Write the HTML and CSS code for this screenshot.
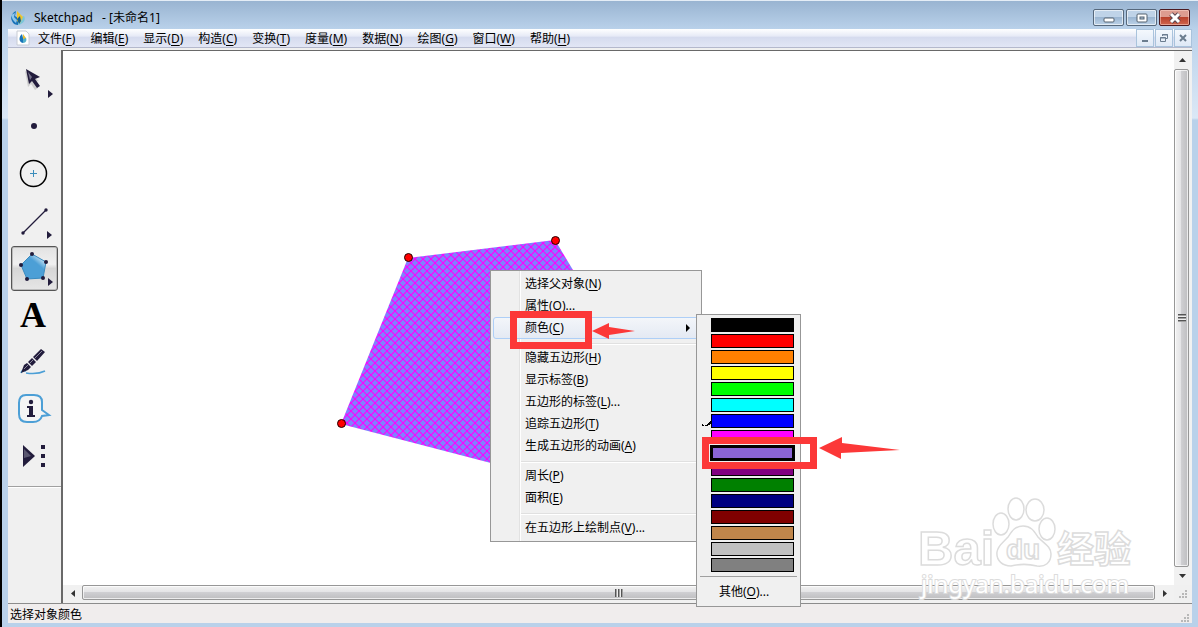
FILE: index.html
```html
<!DOCTYPE html>
<html lang="zh-CN">
<head>
    <meta charset="UTF-8">
    <meta name="viewport" content="width=device-width, initial-scale=1.0">
    <title>Sketchpad - [未命名1]</title>
    <link rel="stylesheet" href="styles.css">
</head>
<body>
    <div class="window">
        <!-- 标题栏 -->
        <header class="title-bar">
            <svg class="app-icon" width="16" height="16" viewBox="0 0 16 16">
                <path d="M6 1C2 3 0 7 2 11c1 3 4 4 6 4V8L5 6z" fill="#1873b8"/>
                <path d="M8 8l6-2c2 3 0 8-6 9z" fill="#7cc6d8"/>
                <path d="M7 1l6 6-3 6-3-2z" fill="#f0c52c"/>
                <path d="M1 5l4-2-1 4 3 3-1 3C3 11 2 8 1 5z" fill="#8fc6ea"/>
                <path d="M7 9l3-3 1 5-2 3z" fill="#14618d"/>
            </svg>
            <span class="title">Sketchpad&nbsp;&nbsp; - [未命名1]</span>
            <div class="window-buttons">
                <button class="win-btn" aria-label="最小化">
                    <svg width="12" height="12" viewBox="0 0 12 12"><rect x="1" y="6" width="10" height="4" rx="1" fill="#fff" stroke="#52606e"/></svg>
                </button>
                <button class="win-btn" aria-label="最大化">
                    <svg width="12" height="12" viewBox="0 0 12 12"><rect x="1" y="2" width="10" height="8" rx="1" fill="#fff" stroke="#52606e"/><rect x="4" y="5" width="4" height="2" fill="#b4c8dc" stroke="#52606e"/></svg>
                </button>
                <button class="win-btn close" aria-label="关闭">
                    <svg width="14" height="12" viewBox="0 0 14 12"><path d="M3 2l8 8M11 2l-8 8" stroke="#5a4650" stroke-width="5"/><path d="M3 2l8 8M11 2l-8 8" stroke="#fff" stroke-width="3"/></svg>
                </button>
            </div>
        </header>

        <!-- 菜单栏 -->
        <nav class="menu-bar">
            <svg class="doc-icon" width="14" height="16" viewBox="0 0 14 16">
                <path d="M1 1h9l3 3v11H1z" fill="#fff" stroke="#c8ccd4"/>
                <path d="M6 4c-3 2-4 8 1 9V8z" fill="#1873b8"/>
                <path d="M7 4l3 4-1 3-2-1z" fill="#e8bd30"/>
                <path d="M7 9l3-1c1 2 0 5-3 5z" fill="#52b0ca"/>
            </svg>
            <button>文件(<u>F</u>)</button>
            <button>编辑(<u>E</u>)</button>
            <button>显示(<u>D</u>)</button>
            <button>构造(<u>C</u>)</button>
            <button>变换(<u>T</u>)</button>
            <button>度量(<u>M</u>)</button>
            <button>数据(<u>N</u>)</button>
            <button>绘图(<u>G</u>)</button>
            <button>窗口(<u>W</u>)</button>
            <button>帮助(<u>H</u>)</button>
            <div class="doc-buttons">
                <button class="doc-btn" aria-label="最小化文档"><svg width="10" height="10" viewBox="0 0 10 10"><path d="M2 8h6" stroke="#6b7d8f" stroke-width="2"/></svg></button>
                <button class="doc-btn" aria-label="还原文档"><svg width="10" height="10" viewBox="0 0 10 10" fill="none" stroke="#6b7d8f"><path d="M3.500 3V1.500h5v4H7M3 2h6"/><path d="M1.500 4.500h5v4h-5zM1 5h6"/></svg></button>
                <button class="doc-btn" aria-label="关闭文档"><svg width="10" height="10" viewBox="0 0 10 10"><path d="M2 2l6 6M8 2L2 8" stroke="#6b7d8f" stroke-width="2"/></svg></button>
            </div>
        </nav>

        <main class="workspace">
            <!-- 工具箱 -->
            <aside class="toolbox">
                <button class="tool" aria-label="移动箭头工具">
                    <svg width="45" height="43" viewBox="0 0 45 43">
                        <path d="M13 12l3 16 3-3 4 6 3-2-4-6 5-1z" fill="#999" opacity=".4"/>
                        <path d="M14 10l3 15 3-3 5 7 3-2-5-7 5-2z" fill="#221c3c"/>
                        <path d="M16 13l2 8 2-3z" fill="#77748c"/>
                        <path d="M36 31l5 4-5 4z" fill="#221c3c"/>
                    </svg>
                </button>
                <button class="tool" aria-label="点工具">
                    <svg width="45" height="43" viewBox="0 0 45 43"><circle cx="22" cy="20" r="3" fill="#221c3c"/></svg>
                </button>
                <button class="tool" aria-label="圆工具">
                    <svg width="45" height="43" viewBox="0 0 45 43"><circle cx="21.500" cy="20.500" r="13" fill="none" stroke="#000" stroke-width="1.500"/><path d="M18 20.500h7M21.500 17v7" stroke="#3b8dbb"/></svg>
                </button>
                <button class="tool" aria-label="线段直尺工具">
                    <svg width="45" height="43" viewBox="0 0 45 43"><path d="M11 33L34 10" stroke="#221c3c" stroke-width="1.300"/><circle cx="11" cy="33" r="1.700" fill="#221c3c"/><circle cx="34" cy="10" r="1.700" fill="#221c3c"/><path d="M35 31l5 4-5 4z" fill="#221c3c"/></svg>
                </button>
                <button class="tool active" aria-label="多边形工具">
                    <svg width="45" height="43" viewBox="0 0 45 43">
                        <defs><linearGradient id="blue" x1="0.900" y1="0" x2="0.400" y2="0.600"><stop offset="0.200" stop-color="#c9e5f5"/><stop offset="0.600" stop-color="#4c9fd6"/></linearGradient></defs>
                        <path d="M20 7l14 8-3 16-16 1L9 18z" fill="url(#blue)" stroke="#398abf"/>
                        <g fill="#221c3c"><circle cx="20" cy="7" r="2"/><circle cx="34" cy="15" r="2"/><circle cx="31" cy="31" r="2"/><circle cx="15" cy="32" r="2"/><circle cx="9" cy="18" r="2"/><path d="M36 31l5 4-5 4z"/></g>
                    </svg>
                </button>
                <button class="tool letter" aria-label="文本工具">A</button>
                <button class="tool" aria-label="标记工具">
                    <svg width="45" height="43" viewBox="0 0 45 43"><path d="M9 32c1-3 2-3 5-2M14 32c7 1 13 1 19-2" fill="none" stroke="#4c9fd6" stroke-width="1.600"/><path d="M9 32l3-8 3-2 4 4-3 3zM16 21l4-4 4 4-4 4zM21 16l8-8 4 3-8 9z" fill="#221c3c"/><path d="M12 28l18-18" stroke="#8b889c"/></svg>
                </button>
                <button class="tool" aria-label="信息工具">
                    <svg width="45" height="43" viewBox="0 0 45 43"><path d="M14 7h8q8 0 8 7v8l7 5-7 1q-2 6-9 6h-6q-8 0-8-8V15q0-8 7-8z" fill="#fff" fill-opacity=".3" stroke="#4c9fd6" stroke-width="2"/><circle cx="19" cy="14" r="2.200" fill="#221c3c"/><path d="M15 18h6v9h2v2h-8v-2h2v-7h-2z" fill="#221c3c"/></svg>
                </button>
                <button class="tool" aria-label="自定义工具">
                    <svg width="45" height="43" viewBox="0 0 45 43"><path d="M11 10l12 11-12 11z" fill="#221c3c"/><path d="M12 14l7 7-7 2z" fill="#5a5770"/><path d="M29 10h4v4h-4zM29 19h4v4h-4zM29 28h4v4h-4z" fill="#221c3c"/></svg>
                </button>
            </aside>

            <section class="document">
                <div class="canvas">
                    <svg class="drawing">
                        <defs>
                            <pattern id="hatch" width="8" height="8" patternUnits="userSpaceOnUse">
                                <rect width="8" height="8" fill="#8080ff"/>
                                <path d="M-1 -1L9 9M9 -1L-1 9" stroke="#ff00ff" stroke-width="1.100"/>
                            </pattern>
                        </defs>
                        <path d="M345 207L492 189L577 331L493 429L278 373z" fill="url(#hatch)"/>
                        <g fill="#f00" stroke="#200">
                            <circle cx="345.500" cy="206.500" r="4"/>
                            <circle cx="492.500" cy="189.500" r="4"/>
                            <circle cx="278.500" cy="372.500" r="4"/>
                        </g>
                    </svg>

                    <!-- 右键菜单 -->
                    <ul class="context-menu">
                        <li><button>选择父对象(<u>N</u>)</button></li>
                        <li><button>属性(<u>O</u>)...</button></li>
                        <li class="open">
                            <button>颜色(<u>C</u>)</button>
                            <div class="color-menu">
                                <div class="swatches">
                                    <button class="swatch black" aria-label="黑色"></button>
                                    <button class="swatch red" aria-label="红色"></button>
                                    <button class="swatch orange" aria-label="橙色"></button>
                                    <button class="swatch yellow" aria-label="黄色"></button>
                                    <button class="swatch lime" aria-label="绿色"></button>
                                    <button class="swatch cyan" aria-label="青色"></button>
                                    <button class="swatch blue" aria-label="蓝色"></button>
                                    <button class="swatch magenta" aria-label="洋红"></button>
                                    <button class="swatch violet selected" aria-label="紫罗兰"></button>
                                    <button class="swatch purple" aria-label="紫色"></button>
                                    <button class="swatch green" aria-label="深绿"></button>
                                    <button class="swatch navy" aria-label="深蓝"></button>
                                    <button class="swatch maroon" aria-label="深红"></button>
                                    <button class="swatch tan" aria-label="棕色"></button>
                                    <button class="swatch silver" aria-label="浅灰"></button>
                                    <button class="swatch gray" aria-label="灰色"></button>
                                </div>
                                <button class="other">其他(<u>O</u>)...</button>
                            </div>
                        </li>
                        <li class="separator"></li>
                        <li><button>隐藏五边形(<u>H</u>)</button></li>
                        <li><button>显示标签(<u>B</u>)</button></li>
                        <li><button>五边形的标签(<u>L</u>)...</button></li>
                        <li><button>追踪五边形(<u>T</u>)</button></li>
                        <li><button>生成五边形的动画(<u>A</u>)</button></li>
                        <li class="separator"></li>
                        <li><button>周长(<u>P</u>)</button></li>
                        <li><button>面积(<u>E</u>)</button></li>
                        <li class="separator"></li>
                        <li><button>在五边形上绘制点(<u>V</u>)...</button></li>
                    </ul>

                    <!-- 红色标注 -->
                    <svg class="marks" width="840" height="430">
                        <path d="M639 373h1v1h1v1h-2zM642 374h2v-1h1v-1h1v-1h1v-1h1v3h-1v1h-2v1h-3z" fill="#000"/>
                        <g fill="none" stroke="#fc3838" stroke-width="7">
                            <rect x="450.500" y="263.500" width="75" height="31"/>
                            <rect x="642.500" y="389.500" width="108" height="25"/>
                        </g>
                        <path d="M529 280l17-8v4l26 4-26 4v4zM756 397l23-11v6l58 7-59 3v6z" fill="#fc3838"/>
                    </svg>

                    <!-- 水印 -->
                    <svg class="watermark" width="225" height="110" viewBox="0 0 225 110">
                        <g fill="#fff" stroke="#dcdcdc" stroke-width="1.500">
                            <text class="wm-bai" x="3" y="71">Bai</text>
                            <ellipse cx="86" cy="30" rx="8" ry="11"/>
                            <ellipse cx="101" cy="15" rx="8" ry="11"/>
                            <ellipse cx="120" cy="16" rx="9" ry="11"/>
                            <ellipse cx="132" cy="35" rx="8" ry="11"/>
                            <path d="M108 32c8 0 11 5 15 11 5 6 13 9 13 17 0 9-6 13-14 12-8-2-18-2-26 0-8 0-15-5-14-14 1-7 7-10 11-15 4-6 7-11 15-11z"/>
                            <text class="wm-du" x="91" y="65">du</text>
                            <text class="wm-cn" x="142" y="69">经验</text>
                        </g>
                        <text class="wm-url" x="6" y="99">jingyan.baidu.com</text>
                    </svg>
                </div>

                <div class="scrollbar vertical">
                    <button class="arrow" aria-label="向上滚动"><svg width="7" height="4"><path d="M0 4l3.500-4L7 4z"/></svg></button>
                    <div class="thumb"><span class="grip"></span></div>
                    <button class="arrow" aria-label="向下滚动"><svg width="7" height="4"><path d="M0 0h7L3.500 4z"/></svg></button>
                </div>
                <div class="scrollbar horizontal">
                    <button class="arrow" aria-label="向左滚动"><svg width="4" height="7"><path d="M4 0v7L0 3.500z"/></svg></button>
                    <div class="thumb"><span class="grip"></span></div>
                    <button class="arrow" aria-label="向右滚动"><svg width="4" height="7"><path d="M0 0l4 3.500L0 7z"/></svg></button>
                </div>
                <div class="corner"><svg class="size-grip" width="9" height="9" viewBox="0 0 9 9"><path d="M6 0h2v2H6zM3 3h2v2H3zM6 3h2v2H6zM0 6h2v2H0zM3 6h2v2H3zM6 6h2v2H6z"/></svg></div>
            </section>
        </main>

        <footer class="status-bar">
            <span>选择对象颜色</span>
            <svg class="size-grip" width="9" height="9" viewBox="0 0 9 9"><path d="M6 0h2v2H6zM3 3h2v2H3zM6 3h2v2H6zM0 6h2v2H0zM3 6h2v2H3zM6 6h2v2H6z"/></svg>
        </footer>
    </div>
</body>
</html>
```
FILE: styles.css
```css
* {
    box-sizing: border-box;
}

body {
    margin: 0;
    font-family: "Noto Sans", "Noto Sans CJK SC", sans-serif;
    font-size: 12px;
    line-height: 18px;
    color: #000;
}

button {
    margin: 0;
    padding: 0;
    border: none;
    background: none;
    font: inherit;
    color: inherit;
}

svg {
    display: block;
}

u {
    text-underline-offset: 2px;
}

/* 窗口外框 */
.window {
    display: flex;
    flex-direction: column;
    height: 100vh;
    min-height: 600px;
    padding: 0 6px 4px;
    border-left: 2px solid #000;
    background: linear-gradient(#99b4d1 0, #b9d1ea 28px, #dbe8f6 118px, #b9d1ea 120px);
    overflow: hidden;
}

.title-bar {
    display: flex;
    align-items: center;
    flex: none;
    height: 29px;
    padding: 5px 8px 0 2px;
    margin: 0 -6px;
    border-top: 1px solid #e4edf6;
    background: linear-gradient(#99b4d1, #b9d1ea);
}

.app-icon {
    margin-left: 6px;
}

.title {
    margin-left: 8px;
}

.window-buttons {
    display: flex;
    gap: 2px;
    margin-left: auto;
}

.win-btn {
    display: flex;
    align-items: center;
    justify-content: center;
    width: 31px;
    height: 17px;
    border: 1px solid #56687c;
    border-radius: 2px;
    box-shadow: inset 0 0 0 1px rgba(255, 255, 255, 0.6);
    background: linear-gradient(#bfd3e8 45%, #9bb6d2 50%, #bcd2e8);
}

.win-btn.close {
    border-color: #4c1a20;
    box-shadow: inset 0 0 0 1px rgba(255, 220, 210, 0.5);
    background: linear-gradient(#dd9c90 45%, #b9412c 50%, #d0674f);
}

/* 菜单栏 */
.menu-bar {
    display: flex;
    align-items: center;
    flex: none;
    gap: 15px;
    height: 19px;
    padding-left: 8px;
    border-bottom: 1px solid #b4b8cc;
    background: linear-gradient(#fff, #e6eaf6 40%, #d5dbee 45%, #e2e6f5);
}

.menu-bar > button {
    line-height: 16px;
    padding-top: 2px;
}

.doc-icon {
    margin-right: -7px;
}

.doc-buttons {
    display: flex;
    gap: 1px;
    margin-left: auto;
}

.doc-btn {
    display: flex;
    align-items: center;
    justify-content: center;
    width: 18px;
    height: 18px;
    border: 1px solid #a9c3dc;
    background: linear-gradient(#f4f8fd, #dfe9f6);
}

/* 主区域 */
.workspace {
    display: flex;
    flex: 1;
    min-height: 0;
    border-top: 2px solid #f0f0f0;
}

.toolbox {
    display: flex;
    flex-direction: column;
    align-items: center;
    gap: 2px;
    flex: none;
    width: 55px;
    padding-top: 8px;
    border-right: 2px solid #696969;
    background: #f0f0f0;
}

.toolbox::after {
    content: "";
    align-self: stretch;
    margin-top: 5px;
    border-top: 1px solid #a0a0a0;
    border-bottom: 1px solid #fff;
}

.tool {
    display: flex;
    align-items: center;
    justify-content: center;
    flex: none;
    width: 47px;
    height: 45px;
    border: 1px solid transparent;
    border-radius: 3px;
}

.tool.active {
    border: 1px solid #555;
    box-shadow: inset 0 0 0 1px #bbb;
    background: linear-gradient(#e2e2e2, #f0f0f0 40%, #d6d6d6 50%, #e6e6e6);
}

.tool.letter {
    padding-right: 3px;
    font-family: "Liberation Serif", serif;
    font-size: 36px;
    font-weight: bold;
    line-height: 43px;
}

.document {
    display: grid;
    grid-template-columns: 1fr 18px;
    grid-template-rows: 1fr 18px;
    flex: 1;
    min-width: 0;
    border-top: 1px solid #696969;
    background: #fff;
}

.canvas {
    position: relative;
    min-width: 0;
    background: #fff;
}

.drawing {
    width: 100%;
    height: 100%;
}

/* 滚动条 */
.scrollbar {
    display: flex;
    background: #f1f1f1;
}

.scrollbar.vertical {
    flex-direction: column;
}

.scrollbar .arrow {
    display: flex;
    align-items: center;
    justify-content: center;
    flex: none;
    width: 16px;
    height: 18px;
    fill: #333;
}

.scrollbar .thumb {
    display: flex;
    align-items: center;
    justify-content: center;
    flex: 1;
    border: 1px solid #979797;
    border-radius: 2px;
    box-shadow: inset 0 0 0 1px rgba(255, 255, 255, 0.7);
}

.vertical .thumb {
    width: 15px;
    background: linear-gradient(90deg, #f2f2f2, #e4e4e6 45%, #cfcfd2 50%, #bebec0);
}

.horizontal .arrow {
    width: 19px;
    height: 16px;
}

.horizontal .thumb {
    height: 15px;
    background: linear-gradient(#f2f2f2, #e4e4e6 45%, #cfcfd2 50%, #bebec0);
}

.grip {
    width: 8px;
    height: 8px;
}

.vertical .grip {
    background: repeating-linear-gradient(#555 0, #555 1px, #eee 2px, #eee 3px);
}

.horizontal .grip {
    background: repeating-linear-gradient(90deg, #555 0, #555 1px, #eee 2px, #eee 3px);
}

.corner {
    display: flex;
    align-items: flex-end;
    justify-content: flex-end;
    padding: 4px;
    background: #f0f0f0;
}

.size-grip {
    fill: #b8b8b8;
}

/* 右键菜单 */
.context-menu {
    position: absolute;
    left: 427px;
    top: 219px;
    z-index: 2;
    width: 212px;
    margin: 0;
    padding: 2px;
    border: 1px solid #979797;
    background: linear-gradient(90deg, #f0f0f0 28px, #e2e2e2 28px, #e2e2e2 29px, #fff 29px, #fff 30px, #f0f0f0 30px);
    list-style: none;
}

.context-menu li {
    position: relative;
    height: 22px;
}

.context-menu li > button {
    display: block;
    width: 100%;
    height: 22px;
    padding-left: 32px;
    text-align: left;
}

.context-menu .open > button {
    padding-left: 31px;
    border: 1px solid #aecff7;
    border-radius: 3px;
    background: linear-gradient(rgba(244, 247, 252, 0.8), rgba(225, 232, 244, 0.8));
}

.context-menu .open::after {
    content: "";
    position: absolute;
    right: 9px;
    top: 7px;
    border: 4px solid transparent;
    border-left: 4px solid #000;
    border-right: none;
}

.context-menu .separator {
    height: 8px;
    padding-top: 4px;
}

.context-menu .separator::before {
    content: "";
    display: block;
    margin-left: 28px;
    border-top: 1px solid #e0e0e0;
    border-bottom: 1px solid #fff;
}

/* 颜色子菜单 */
.color-menu {
    position: absolute;
    left: 203px;
    top: -3px;
    z-index: 2;
    width: 105px;
    padding: 3px;
    border: 1px solid #979797;
    background: #f0f0f0;
}

.swatches {
    display: flex;
    flex-direction: column;
    gap: 2px;
    padding: 0 3px 4px 11px;
    border-bottom: 1px solid #a0a0a0;
}

.swatch {
    height: 14px;
    border: 1px solid #000;
}

.swatch.selected {
    border-width: 2px;
    box-shadow: 0 0 0 1px #000;
}

.black { background: #000; }
.red { background: #f00; }
.orange { background: #ff8000; }
.yellow { background: #ff0; }
.lime { background: #0f0; }
.cyan { background: #0ff; }
.blue { background: #00f; }
.magenta { background: #f0f; }
.violet { background: #8a64d6; }
.purple { background: #800080; }
.green { background: #008000; }
.navy { background: #000080; }
.maroon { background: #800000; }
.tan { background: #c0864b; }
.silver { background: #c0c0c0; }
.gray { background: #808080; }

.color-menu .other {
    display: block;
    width: 100%;
    height: 26px;
    padding-left: 19px;
    padding-top: 4px;
    text-align: left;
}

/* 标注与水印 */
.marks {
    position: absolute;
    left: 0;
    top: 0;
    z-index: 3;
    pointer-events: none;
}

.watermark {
    position: absolute;
    right: 34px;
    bottom: -19px;
    z-index: 1;
    pointer-events: none;
}

.wm-bai {
    font: bold 49px "Liberation Sans", sans-serif;
}

.wm-du {
    font: bold 28px "Liberation Sans", sans-serif;
}

.wm-cn {
    font: bold 37px "Noto Sans CJK SC", sans-serif;
}

.wm-url {
    font-size: 24px;
    fill: #fff;
    stroke: #dcdcdc;
    stroke-width: 2px;
    paint-order: stroke;
}

/* 状态栏 */
.status-bar {
    display: flex;
    align-items: center;
    justify-content: space-between;
    flex: none;
    height: 20px;
    padding: 2px 2px 0;
    border-top: 1px solid #8c8c8c;
    background: #f0eded;
}

.status-bar .size-grip {
    align-self: flex-end;
}
```
